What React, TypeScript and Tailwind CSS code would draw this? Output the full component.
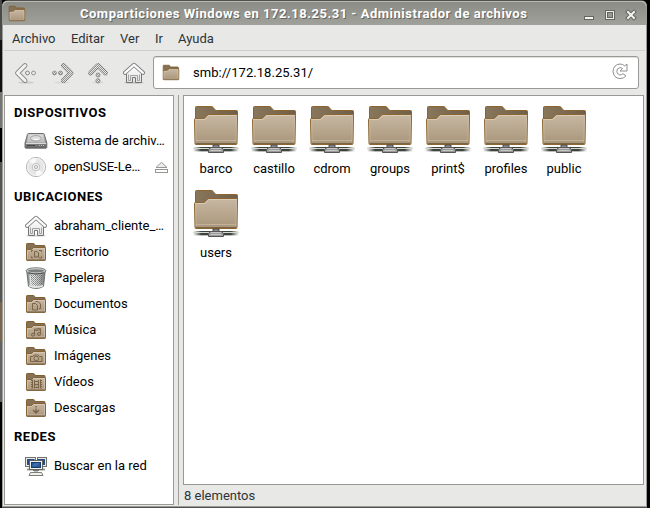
import React from "react";

const ROBOTO = "font-['Roboto','Noto_Sans',sans-serif]";

function Gradients() {
  return (
    <svg width="0" height="0" className="absolute">
      <defs>
        <linearGradient id="front" x1="0" y1="0" x2="0" y2="1">
          <stop offset="0" stopColor="#c8b8a2" />
          <stop offset="1" stopColor="#a8957a" />
        </linearGradient>
        <linearGradient id="back" x1="0" y1="0" x2="1" y2="0">
          <stop offset="0" stopColor="#89775b" />
          <stop offset="1" stopColor="#6f5f48" />
        </linearGradient>
        <linearGradient id="pale" x1="0" y1="0" x2="0" y2="1">
          <stop offset="0" stopColor="#ffffff" />
          <stop offset="1" stopColor="#e2e2e2" />
        </linearGradient>
        <linearGradient id="metal" x1="0" y1="0" x2="0" y2="1">
          <stop offset="0" stopColor="#dedede" />
          <stop offset="1" stopColor="#bababa" />
        </linearGradient>
        <linearGradient id="drive" x1="0" y1="0" x2="0" y2="1">
          <stop offset="0" stopColor="#c8c8c8" />
          <stop offset="1" stopColor="#606060" />
        </linearGradient>
        <linearGradient id="wire" x1="0" y1="0" x2="1" y2="0">
          <stop offset="0" stopColor="#3d423c" stopOpacity="0" />
          <stop offset="0.18" stopColor="#3d423c" />
          <stop offset="0.82" stopColor="#3d423c" />
          <stop offset="1" stopColor="#3d423c" stopOpacity="0" />
        </linearGradient>
        <linearGradient id="bin" x1="0" y1="0" x2="1" y2="0">
          <stop offset="0" stopColor="#70757a" />
          <stop offset="0.35" stopColor="#eef0ee" />
          <stop offset="0.7" stopColor="#b9bdbb" />
          <stop offset="1" stopColor="#646866" />
        </linearGradient>
        <pattern id="mesh" width="2" height="2" patternUnits="userSpaceOnUse">
          <rect width="1" height="1" fill="#4a4f4d" />
          <rect x="1" y="1" width="1" height="1" fill="#6d7270" />
        </pattern>
        <pattern id="dither" width="2" height="2" patternUnits="userSpaceOnUse">
          <rect width="2" height="2" fill="#e8e8e7" />
          <rect width="1" height="1" fill="#949494" />
          <rect x="1" y="1" width="1" height="1" fill="#949494" />
        </pattern>
        <pattern id="ditherEdge" width="2" height="2" patternUnits="userSpaceOnUse">
          <rect width="2" height="2" fill="#bdbdbc" />
          <rect width="1" height="1" fill="#747474" />
          <rect x="1" y="1" width="1" height="1" fill="#747474" />
        </pattern>
      </defs>
    </svg>
  );
}

function ShareFolder() {
  return (
    <svg width="48" height="49" viewBox="0 0 48 49" className="block">
      <path d="M3.5 14V2.5q0-1 1-1h15q1 0 1.5.8l2 2.4q.5.8 1.500.8h20q1 0 1 1V14z" fill="url(#back)" stroke="#8c642c" />
      <path d="M2.500 14.500q0-1 1-1h8q1 0 1.600-.8l2.200-2.500q.6-.7 1.600-.7h27.600q1 0 1 1L45 38.500q0 1-1 1H4q-1 0-1-1z" fill="url(#front)" stroke="#8c6530" />
      <path d="M3.500 15v-.500h8.500q1 0 1.700-.8l2.200-2.500q.6-.7 1.600-.7h27" fill="none" stroke="#ded2bf" strokeOpacity="0.75" />
      <path d="M3.700 16L4 37.500M44.400 12L44 37.500M4 35.500h40" fill="none" stroke="#e1d5c2" strokeOpacity="0.4" />
      <path d="M4 38.500h40" stroke="#7c6648" />
      <rect x="1" y="42" width="46" height="1" fill="url(#wire)" />
      <rect x="1" y="43" width="46" height="1" fill="#d5d9d2" />
      <rect x="1" y="44" width="46" height="2" fill="url(#wire)" />
      <rect x="1" y="46" width="46" height="1" fill="url(#wire)" opacity="0.35" />
      <path d="M21 40h6v3h-6z" fill="#8e8e8e" stroke="#4b4b4b" />
      <path d="M18.500 42.500h11l2 2v3h-15v-3z" fill="#999" stroke="#565656" />
      <path d="M19 43.500h10M18.500 45.500h11" stroke="#c7c7c7" />
    </svg>
  );
}

type Emblem = "none" | "desktop" | "docs" | "music" | "camera" | "film" | "down";

function Folder({ emblem = "none", small = false }: { emblem?: Emblem; small?: boolean }) {
  return (
    <svg width={small ? 18 : 22} height={small ? 17 : 20} viewBox="0 0 22 20" preserveAspectRatio="none" className="block">
      <path d="M1.500 8V2.200q0-.7.700-.7h6.300q.7 0 1 .7l.6 1.300h9.200q.7 0 .7.700V8z" fill="#857157" stroke="#80602f" />
      <path d="M1.500 7.500H6q.6 0 1-.5l1-1q.4-.500 1-.500h10.800q.7 0 .7.700V17.800q0 .7-.7.700H2.200q-.7 0-.7-.7z" fill="url(#front)" stroke="#846234" />
      <path d="M2.500 17V8.500H6.500L8.500 6.500h11V17z" fill="none" stroke="#e2d6c4" strokeOpacity="0.5" />
      <path d="M2 17.800h18" stroke="#8b7354" />
      <g fill="none" stroke="#796448" strokeWidth="1">
        {emblem === "desktop" && (
          <>
            <path d="M6.500 10V8.500H8M14 8.500h2.500V10M6.500 14.500V16H8M14 16h2.500v-1.500" />
            <path d="M9.500 9.500h2.500l1.500 1.500v4h-4z" />
          </>
        )}
        {emblem === "docs" && (
          <>
            <path d="M7.500 9.500h3l2 2v4.500h-5z" />
            <path d="M10.500 7.500h2.500l2.500 2.500v4.500h-1.500" />
          </>
        )}
        {emblem === "music" && (
          <>
            <path d="M9.500 14.500V9.200l6-.7v5M9.500 10.500l6-.7" />
            <circle cx="8" cy="14.700" r="1.500" />
            <circle cx="14" cy="14" r="1.500" />
          </>
        )}
        {emblem === "camera" && (
          <>
            <path d="M5.500 10.500h2.500l1.200-1.500h4l1.300 1.500h2.500v5h-11.500z" />
            <circle cx="11.300" cy="12.500" r="2.300" />
          </>
        )}
        {emblem === "film" && (
          <>
            <path d="M7.500 7.500v9M15.500 7.500v9M9.500 8v8.500M13.500 8v8.500M9.500 9.500h4M9.500 12.500h4M9.500 15.500h4" />
            <path d="M6.500 8v8.500M16.500 8v8.500" strokeDasharray="1 1" />
          </>
        )}
        {emblem === "down" && <path d="M11 8v1.500M11 10.500v4M8 12l3 3 3-3" strokeWidth="1.300" />}
      </g>
    </svg>
  );
}

function House({ className = "" }: { className?: string }) {
  return (
    <svg width="22" height="22" viewBox="0 0 22 22" className={"block " + className}>
      <ellipse cx="11" cy="20.800" rx="10" ry="1" fill="#000" opacity="0.15" />
      <path d="M3.500 10v10.500h6v-5h3v5h6V10L11 3.500z" fill="url(#pale)" stroke="#747474" />
      <path d="M5.500 12.500v6h2v-5h7v5h2v-6" fill="none" stroke="#a2a2a2" />
      <path d="M2 10.800L11 2.800l9 8" fill="none" stroke="#7c7c7c" strokeWidth="4" strokeLinecap="round" strokeLinejoin="round" />
      <path d="M2 10.800L11 2.800l9 8" fill="none" stroke="#fbfbfb" strokeWidth="2.300" strokeLinecap="round" strokeLinejoin="round" />
    </svg>
  );
}

function ArrowLeft() {
  return (
    <svg width="24" height="22" viewBox="0 0 24 22" className="block">
      <ellipse cx="12" cy="20.500" rx="8" ry="1.200" fill="#000" opacity="0.12" />
      <path d="M11 3.500L3.500 11l7.500 7.500" fill="none" stroke="#8a8a8a" strokeWidth="4.800" strokeLinecap="round" strokeLinejoin="round" />
      <path d="M11 3.500L3.500 11l7.500 7.500" fill="none" stroke="#f3f3f3" strokeWidth="3" strokeLinecap="round" strokeLinejoin="round" />
      <circle cx="13.500" cy="11" r="1.900" fill="#eee" stroke="#858585" />
      <circle cx="19.500" cy="11" r="1.900" fill="#eee" stroke="#8f8f8f" />
    </svg>
  );
}

function ArrowRight() {
  return (
    <svg width="24" height="22" viewBox="0 0 24 22" className="block">
      <ellipse cx="12" cy="20.500" rx="8" ry="1.200" fill="#000" opacity="0.06" />
      <path d="M13.500 3.500L21 11l-7.500 7.500" fill="none" stroke="url(#ditherEdge)" strokeWidth="4.800" strokeLinecap="round" strokeLinejoin="round" />
      <path d="M13.500 3.500L21 11l-7.500 7.500" fill="none" stroke="url(#dither)" strokeWidth="3" strokeLinecap="round" strokeLinejoin="round" />
      <circle cx="4.500" cy="11" r="1.900" fill="url(#dither)" stroke="#8f8f8f" />
      <circle cx="10.500" cy="11" r="1.900" fill="url(#dither)" stroke="#858585" />
    </svg>
  );
}

function ArrowUp() {
  return (
    <svg width="22" height="22" viewBox="0 0 22 22" className="block">
      <ellipse cx="11" cy="20.500" rx="6" ry="1.200" fill="#000" opacity="0.06" />
      <path d="M3.500 11L11 3.500l7.500 7.500" fill="none" stroke="url(#ditherEdge)" strokeWidth="4.800" strokeLinecap="round" strokeLinejoin="round" />
      <path d="M3.500 11L11 3.500l7.500 7.500" fill="none" stroke="url(#dither)" strokeWidth="3" strokeLinecap="round" strokeLinejoin="round" />
      <circle cx="11" cy="13" r="2" fill="url(#dither)" stroke="#8f8f8f" />
      <circle cx="11" cy="18.800" r="2.100" fill="url(#dither)" stroke="#8f8f8f" />
    </svg>
  );
}

function Reload() {
  return (
    <svg width="18" height="18" viewBox="0 0 18 18" className="block">
      <path
        d="M15.500 1.500v7h-7l2.500-2.500q-1.300-1-2.700-.8-3 .5-3 3.600t3 3.600q1.700.2 3.200-1.200l3 2q-2.200 2.900-6 2.900-6.500-.5-7-7.300.5-6.800 7-7.300 3 0 4.700 2z"
        transform="translate(.5 -.5)"
        fill="#fff"
        stroke="#8f8f8f"
        strokeLinejoin="round"
      />
    </svg>
  );
}

function Drive() {
  return (
    <svg width="24" height="18" viewBox="0 0 24 18" className="block">
      <path d="M4.500 1.500h14.800q.8 0 1 .8l2.500 8.700v4.200q0 1-1 1H2q-1 0-1-1V11l2.500-8.700q.2-.8 1-.8z" fill="url(#drive)" stroke="#707070" />
      <path d="M5 2.500h13.800l2.500 8.300H2.400z" fill="url(#metal)" />
      <ellipse cx="11.900" cy="6.300" rx="5.500" ry="2.700" fill="#dedede" stroke="#a3a3a3" />
      <path d="M9.500 7.500h5.500" stroke="#fff" />
      <path d="M2 11.500h20" stroke="#dadada" />
      <path d="M3 13.500h8" stroke="#4a4a4a" />
      <path d="M15 13.500h5" stroke="#bbb" strokeDasharray="1 1" />
    </svg>
  );
}

function Disc() {
  return (
    <svg width="22" height="22" viewBox="0 0 22 22" className="block">
      <circle cx="11" cy="11" r="9.600" fill="#e6e6e6" stroke="#b5b5b5" />
      <path d="M11 11L4 4.500Q7 1.500 11 2zM11 11l7 6.500q-3 3-7 2.500z" fill="#fafafa" />
      <circle cx="11" cy="11" r="8.500" fill="none" stroke="#f5f5f5" />
      <circle cx="11" cy="11" r="3.800" fill="#f1f1f1" stroke="#c1c1c1" />
      <circle cx="11" cy="11" r="1.500" fill="#fff" stroke="#a8a8a8" />
    </svg>
  );
}

function Trash() {
  return (
    <svg width="22" height="22" viewBox="0 0 22 22" className="block">
      <path d="M1.700 3.500l1.800 15.800Q7 21.500 11 21.500t7.500-2.200L20.300 3.500z" fill="url(#bin)" stroke="#6f7472" />
      <path d="M4 7.500l1.200 10.300q5.800 2 11.600 0L18 7.500z" fill="url(#mesh)" opacity="0.65" />
      <path d="M5 8l1 10" stroke="#fff" strokeOpacity="0.7" strokeWidth="1.500" />
      <path d="M4 18.800q7 2.500 14 0" fill="none" stroke="#e3e6e4" strokeWidth="1.500" />
      <ellipse cx="11" cy="3.800" rx="9.200" ry="2.400" fill="#7b807e" stroke="#d3d7d5" strokeWidth="1.500" />
      <ellipse cx="11" cy="3.800" rx="9.900" ry="3.100" fill="none" stroke="#565b59" strokeWidth="0.700" />
      <path d="M3.500 5.800q7.500 2.600 15 0" fill="none" stroke="#4a4f4d" />
    </svg>
  );
}

function Network() {
  return (
    <svg width="24" height="20" viewBox="0 0 24 20" className="block">
      <path d="M3 13.500h6M15 13.500h6" stroke="#999c95" strokeWidth="2" />
      <rect x="1.500" y="1.500" width="10" height="9" fill="#ebece7" stroke="#70736b" />
      <rect x="13.500" y="1.500" width="9" height="9" fill="#ebece7" stroke="#70736b" />
      <rect x="3" y="3" width="7.500" height="6" fill="#244d86" />
      <rect x="13.500" y="3" width="7.500" height="6" fill="#244d86" />
      <rect x="5.500" y="4.500" width="13" height="9" fill="#f3f4ef" stroke="#60635c" />
      <rect x="7.500" y="6.500" width="9" height="5" fill="#2c5998" stroke="#173a6b" />
      <path d="M8 10l3-3h5l-4 3z" fill="#3f70af" />
      <path d="M9 14.500h6M10 16h4" stroke="#787b73" />
      <path d="M6.500 16.500h11l1.500 3h-14z" fill="#f0f1ec" stroke="#7c7e76" />
    </svg>
  );
}

function Eject() {
  return (
    <svg width="13" height="13" viewBox="0 0 13 13" className="block">
      <path d="M6.500 1.300l5.500 5.200H1z" fill="#eee" stroke="#969692" />
      <rect x=".5" y="8.500" width="12" height="3" fill="#fff" stroke="#969692" />
    </svg>
  );
}

function SideHeader({ children, className = "h-[31px]" }: { children: React.ReactNode; className?: string }) {
  return <div className={"flex items-center pl-[9px] font-bold tracking-[0.5px] " + className}>{children}</div>;
}

function SideRow({ icon, label, eject = false }: { icon: React.ReactNode; label: string; eject?: boolean }) {
  return (
    <div className="flex h-[26px] items-center pl-[19px]">
      <div className="flex w-6 justify-center">{icon}</div>
      <div className="ml-[6px] whitespace-nowrap">{label}</div>
      {eject && (
        <div className="mr-[5px] ml-auto">
          <Eject />
        </div>
      )}
    </div>
  );
}

const places: { label: string; emblem: Emblem }[] = [
  { label: "Documentos", emblem: "docs" },
  { label: "Música", emblem: "music" },
  { label: "Imágenes", emblem: "camera" },
  { label: "Vídeos", emblem: "film" },
  { label: "Descargas", emblem: "down" },
];

const shares = ["barco", "castillo", "cdrom", "groups", "print$", "profiles", "public", "users"];

function TitleBar() {
  return (
    <div className="flex h-6 shrink-0 items-center rounded-t-[5px] border-t border-[#b9bab5] bg-linear-to-b from-[#8b8c86] to-[#a0a19a] pl-[5px]">
      <Folder small />
      <div className="ml-[54px] w-[474px] text-[13px] font-bold tracking-[0.51px] whitespace-nowrap text-white [text-shadow:1px_1px_0_#65665f]">
        Comparticiones Windows en 172.18.25.31 - Administrador de archivos
      </div>
      <svg width="56" height="16" viewBox="0 0 56 16" className="ml-[28px] block shrink-0">
        <rect x="2.500" y="10.500" width="9" height="3" fill="#f4f4f2" stroke="#656660" />
        <rect x="23.500" y="4.500" width="9" height="9" fill="#eeeeec" stroke="#656660" />
        <rect x="25.500" y="6.500" width="5" height="5" fill="#969790" stroke="#656660" />
        <path d="M46 6l6 6M52 6l-6 6" stroke="#656660" strokeWidth="4" strokeLinecap="square" />
        <path d="M46 6l6 6M52 6l-6 6" stroke="#f4f4f2" strokeWidth="2" strokeLinecap="square" />
      </svg>
    </div>
  );
}

export default function App() {
  return (
    <div className={"flex h-[508px] w-[650px] overflow-hidden bg-black text-[13px] leading-4 text-black " + ROBOTO}>
      <Gradients />
      <div className="flex w-[2px] shrink-0 flex-col">
        <div className="h-10 bg-[#494949]" />
        <div className="h-[52px] bg-[#111]" />
        <div className="h-[36px] bg-[#747474]" />
        <div className="h-[34px] bg-black" />
        <div className="h-[140px] bg-[#555]" />
        <div className="h-[40px] bg-[#77654e]" />
        <div className="h-[60px] bg-[#606468]" />
        <div className="flex-1 bg-black" />
      </div>
      <div className="flex w-[645px] flex-col rounded-t-[6px] bg-[#50514d] pt-px">
        <div className="flex h-[506px] flex-col overflow-hidden rounded-t-[5px] border-r border-b border-l border-[#9b9c96] bg-[#e8e8e7]">
          <TitleBar />
          <div className="mx-px flex h-[26px] shrink-0 items-center border-b border-[#cfcfcd] pt-[3px] pl-2 text-[#2e3436]">
            <div className="w-[59px]">Archivo</div>
            <div className="w-[49px]">Editar</div>
            <div className="w-[35px]">Ver</div>
            <div className="w-[23px]">Ir</div>
            <div>Ayuda</div>
          </div>
          <div className="flex h-11 shrink-0 items-center pb-px pl-[11px]">
            <ArrowLeft />
            <div className="ml-[12px]">
              <ArrowRight />
            </div>
            <div className="ml-[13px]">
              <ArrowUp />
            </div>
            <House className="ml-[14px]" />
            <div className="ml-2 flex h-[33px] w-[486px] items-center rounded-[3px] border border-[#999a95] bg-white pl-[8px] shadow-[inset_0_1px_0_#e0e0de]">
              <Folder small />
              <div className="ml-[13px] tracking-[0.05px]">smb://172.18.25.31/</div>
              <div className="mr-[9px] mb-[2px] ml-auto">
                <Reload />
              </div>
            </div>
          </div>
          <div className="flex min-h-0 flex-1 pl-px">
            <div className="h-[410px] w-[170px] shrink-0 border border-[#999a95] bg-white pt-px">
              <SideHeader>DISPOSITIVOS</SideHeader>
              <SideRow icon={<Drive />} label="Sistema de archiv…" />
              <SideRow icon={<Disc />} label="openSUSE-Le…" eject />
              <SideHeader className="h-[33px]">UBICACIONES</SideHeader>
              <SideRow icon={<House />} label="abraham_cliente_…" />
              <SideRow icon={<Folder emblem="desktop" />} label="Escritorio" />
              <SideRow icon={<Trash />} label="Papelera" />
              {places.map((p) => (
                <SideRow key={p.label} icon={<Folder emblem={p.emblem} />} label={p.label} />
              ))}
              <SideHeader className="h-8">REDES</SideHeader>
              <SideRow icon={<Network />} label="Buscar en la red" />
            </div>
            <div className="ml-1 h-[410px] w-px shrink-0 bg-[#9d9e99]" />
            <div className="ml-1 w-[461px]">
              <div className="h-[390px] border border-[#999a95] bg-white pt-[9px] pl-[3px]">
                <div className="grid w-[406px] grid-cols-7">
                  {shares.map((name) => (
                    <div key={name} className="flex h-[84px] flex-col items-center">
                      <ShareFolder />
                      <div className="mt-[7px]">{name}</div>
                    </div>
                  ))}
                </div>
              </div>
              <div className="pt-[3px] pl-[1px] text-[#2e3436]">8 elementos</div>
            </div>
          </div>
        </div>
      </div>
    </div>
  );
}
